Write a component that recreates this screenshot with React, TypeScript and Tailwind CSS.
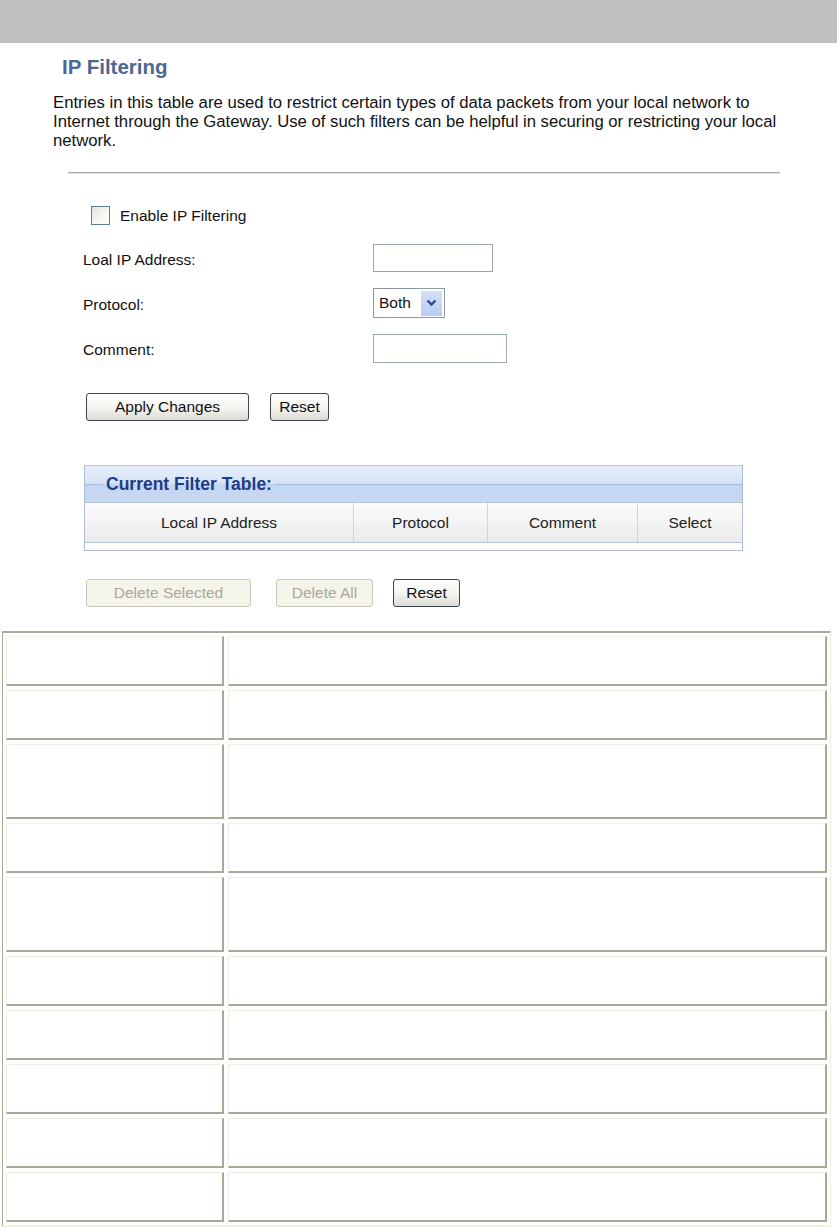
import React from "react";

// row heights of the description table below the screenshot
const descRows = [50, 50, 75, 50, 75, 50, 50, 50, 50, 50];

function XpButton({
  label,
  width,
  disabled,
}: {
  label: string;
  width: string;
  disabled?: boolean;
}) {
  if (disabled) {
    return (
      <button
        disabled
        className={`${width} h-[28px] rounded-[3px] border border-[#c9c7ba] bg-[#f5f4ea] text-[15.5px] text-[#aca899]`}
      >
        {label}
      </button>
    );
  }
  return (
    <button
      className={`${width} h-[28px] rounded-[3px] border border-[#3c4650] bg-[linear-gradient(to_bottom,#ffffff_0%,#f3f3ef_55%,#dcdbd3_100%)] text-[15.5px] text-[#111]`}
    >
      {label}
    </button>
  );
}

function FormRow({ label, children }: { label: string; children: React.ReactNode }) {
  return (
    <div className="flex h-[30px] items-center">
      <div className="w-[290px] pt-[3px] text-[15.5px] text-[#111]">{label}</div>
      {children}
    </div>
  );
}

export default function App() {
  return (
    <div className="h-[1232px] w-[837px] overflow-hidden bg-white font-['Liberation_Sans',Arial,sans-serif]">
      {/* TOP BAR */}
      <div className="h-[43px] bg-[#c0c0c0]" />

      {/* TITLE + INTRO */}
      <div className="pl-[53px]">
        <h1 className="mt-[12px] pl-[9px] text-[20.5px] leading-[24px] font-bold text-[#4c6892]">
          IP Filtering
        </h1>
        <p className="mt-[14px] w-[740px] text-[16.7px] leading-[19px] text-[#111]">
          Entries in this table are used to restrict certain types of data packets from your local
          network to Internet through the Gateway. Use of such filters can be helpful in securing or
          restricting your local network.
        </p>
        <div className="ml-[15px] mt-[22px] h-[2px] w-[712px] border-t border-[#a3a3a3] bg-[#e4e4e4]" />
      </div>

      {/* FORM */}
      <div className="pl-[83px]">
        <div className="ml-[8px] mt-[31px] flex h-[20px] items-center gap-[10px]">
          <span className="h-[19px] w-[19px] border border-[#5f7c9c] bg-[linear-gradient(135deg,#e2e2dc_0%,#f7f7f4_60%,#ffffff_100%)]" />
          <span className="pt-[2px] text-[15.5px] text-[#111]">Enable IP Filtering</span>
        </div>

        <div className="mt-[18px] flex flex-col gap-[15px]">
          <FormRow label="Loal IP Address:">
            <input className="h-[28px] w-[120px] border border-[#9aa5b1] bg-white outline-none" />
          </FormRow>
          <FormRow label="Protocol:">
            <div className="flex h-[30px] w-[72px] items-center border border-[#8c98a6] bg-white pl-[5px] pr-[2px]">
              <span className="flex-1 text-[15.5px] text-[#111]">Both</span>
              <span className="flex h-[25px] w-[21px] items-center justify-center bg-[linear-gradient(to_bottom,#d4e0f8,#b9cbf2)]">
                <svg width="11" height="8" viewBox="0 0 11 8">
                  <path d="M1.5 1.5 L5.5 5.5 L9.5 1.5" fill="none" stroke="#2d4b8f" strokeWidth="2.4" />
                </svg>
              </span>
            </div>
          </FormRow>
          <FormRow label="Comment:">
            <input className="h-[29px] w-[134px] border border-[#9aa5b1] bg-white outline-none" />
          </FormRow>
        </div>

        <div className="ml-[3px] mt-[30px] flex items-center gap-[21px]">
          <XpButton label="Apply Changes" width="w-[163px]" />
          <XpButton label="Reset" width="w-[59px]" />
        </div>
      </div>

      {/* CURRENT FILTER TABLE */}
      <div className="ml-[84px] mt-[44px] w-[659px] border-x border-b border-[#aebdd6]">
        <div className="flex h-[37px] items-center border-t border-[#b7c7e0] bg-[linear-gradient(to_bottom,#e6eefb_0%,#d6e3f7_48%,#c3d5f2_52%,#c9d9f3_100%)]">
          <div className="h-px w-[18px] bg-[#a6bde3]" />
          <span className="px-[3px] text-[17.5px] font-bold text-[#1f3c86]">Current Filter Table:</span>
          <div className="h-px flex-1 bg-[#a6bde3]" />
        </div>
        <div className="flex h-[41px] border-y border-[#b9c4d4] bg-[linear-gradient(to_bottom,#fcfcfc,#ebebeb)] text-[15.5px] text-[#222]">
          <div className="flex w-[269px] items-center justify-center border-r border-[#d4d4d4]">
            Local IP Address
          </div>
          <div className="flex w-[134px] items-center justify-center border-r border-[#d4d4d4]">
            Protocol
          </div>
          <div className="flex w-[150px] items-center justify-center border-r border-[#d4d4d4]">
            Comment
          </div>
          <div className="flex flex-1 items-center justify-center">Select</div>
        </div>
        <div className="h-[7px] bg-white" />
      </div>

      <div className="ml-[86px] mt-[28px] flex items-center">
        <XpButton label="Delete Selected" width="w-[165px]" disabled />
        <div className="ml-[25px]">
          <XpButton label="Delete All" width="w-[97px]" disabled />
        </div>
        <div className="ml-[20px]">
          <XpButton label="Reset" width="w-[67px]" />
        </div>
      </div>

      {/* DESCRIPTION TABLE (empty) */}
      <div className="ml-[2px] mt-[24px] flex w-[829px] flex-col gap-[4px] border-l border-t-2 border-r border-b-2 border-l-[#aca899] border-t-[#aca899] border-r-[#f1efe2] border-b-[#f1efe2] p-[3px]">
        {descRows.map((h, i) => (
          <div key={i} className="flex gap-[4px]" style={{ height: h }}>
            <div className="w-[218px] border-l border-t border-b-2 border-r-2 border-l-[#f1efe2] border-t-[#f1efe2] border-b-[#aca899] border-r-[#aca899] bg-white" />
            <div className="flex-1 border-l border-t border-b-2 border-r-2 border-l-[#f1efe2] border-t-[#f1efe2] border-b-[#aca899] border-r-[#aca899] bg-white" />
          </div>
        ))}
      </div>
    </div>
  );
}
